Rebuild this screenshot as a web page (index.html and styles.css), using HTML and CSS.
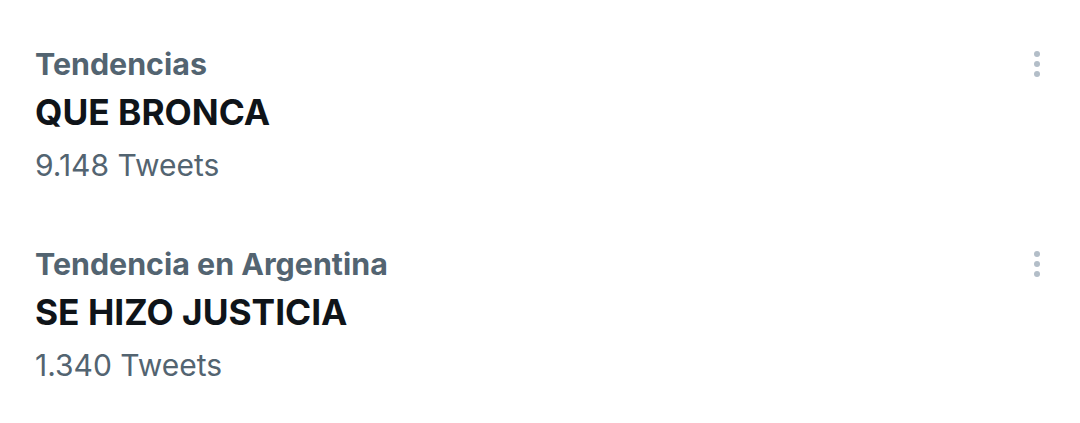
FILE: index.html
```html
<!DOCTYPE html>
<html lang="es">
<head>
<meta charset="utf-8">
<link rel="stylesheet" href="styles.css">
</head>
<body>
<div class="list">
  <div class="trend">
    <div class="text">
      <div class="context">Tendencias</div>
      <div class="title">QUE BRONCA</div>
      <div class="count">9.148 Tweets</div>
    </div>
    <div class="more"><span></span><span></span><span></span></div>
  </div>
  <div class="trend">
    <div class="text">
      <div class="context">Tendencia en Argentina</div>
      <div class="title">SE HIZO JUSTICIA</div>
      <div class="count">1.340 Tweets</div>
    </div>
    <div class="more"><span></span><span></span><span></span></div>
  </div>
</div>
</body>
</html>
```
FILE: styles.css
```css
html, body {
  margin: 0;
  padding: 0;
  background: #ffffff;
}
body {
  font-family: Inter, Roboto, "Noto Sans", sans-serif;
  width: 1080px;
  height: 423px;
  overflow: hidden;
}
.list {
  display: flex;
  flex-direction: column;
  padding: 44px 0 0 35px;
}
.trend {
  display: flex;
  justify-content: space-between;
  height: 200px;
  padding-right: 40px;
}
.text {
  display: flex;
  flex-direction: column;
}
.context {
  font-size: 30.4px;
  font-weight: 700;
  color: #536471;
  line-height: 40px;
}
.title {
  font-size: 35.3px;
  font-weight: 700;
  color: #0f1419;
  line-height: 58px;
}
.count {
  font-size: 30px;
  font-weight: 400;
  color: #536471;
  line-height: 46px;
}
.more {
  display: flex;
  flex-direction: column;
  gap: 4px;
  padding-top: 7px;
}
.more span {
  width: 6px;
  height: 6px;
  border-radius: 50%;
  background: #b3bec8;
}
```
